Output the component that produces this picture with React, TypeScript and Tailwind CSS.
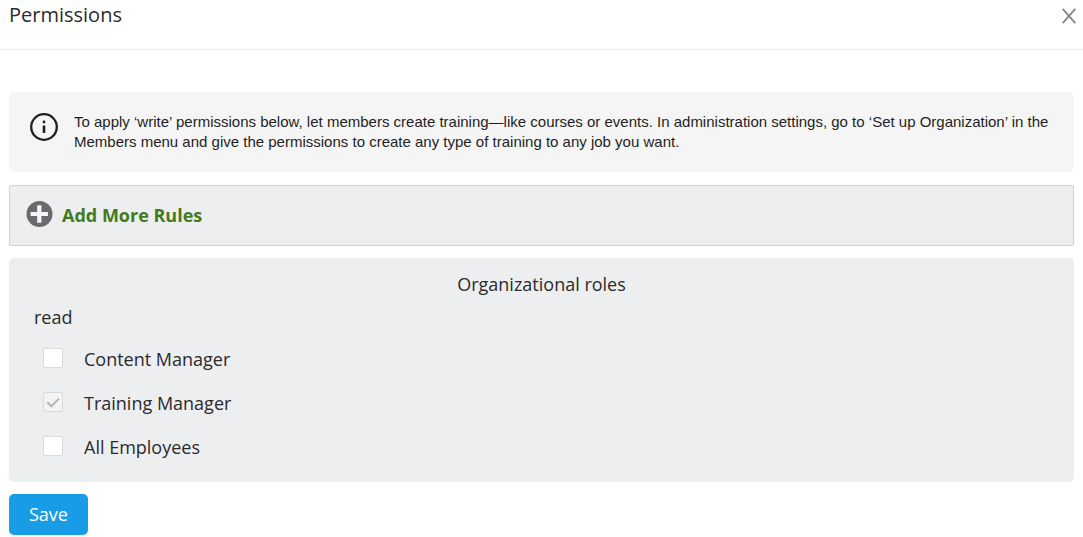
import { useState } from "react";

type Role = { id: string; name: string; checked: boolean; locked: boolean };

const initialRoles: Role[] = [
  { id: "content-manager", name: "Content Manager", checked: false, locked: false },
  { id: "training-manager", name: "Training Manager", checked: true, locked: true },
  { id: "all-employees", name: "All Employees", checked: false, locked: false },
];

function CloseIcon() {
  return (
    <svg width="14" height="16" viewBox="0 0 14 16" fill="none" stroke="#858585" strokeWidth="1.8" aria-hidden="true">
      <path d="M0.7 0.9 13.3 15.1M13.3 0.9 0.7 15.1" />
    </svg>
  );
}

function InfoIcon() {
  return (
    <svg className="shrink-0" width="28" height="30" viewBox="0 0 28 30" fill="none" aria-hidden="true">
      <circle cx="14" cy="15" r="12.8" stroke="#1f1f1f" strokeWidth="2.3" />
      <path d="M14 13.5v7.5" stroke="#1f1f1f" strokeWidth="2.6" />
      <circle cx="14" cy="10" r="1.4" fill="#1f1f1f" />
    </svg>
  );
}

function PlusIcon() {
  return (
    <svg className="shrink-0" width="27" height="28" viewBox="0 0 27 28" aria-hidden="true">
      <circle cx="13.5" cy="13" r="13" fill="#6b6b6b" />
      <path d="M13.3 4.3v17.4M4.6 13h17.4" stroke="#f4f5f6" strokeWidth="4.2" />
    </svg>
  );
}

function RoleRow({ role, onToggle }: { role: Role; onToggle: () => void }) {
  return (
    <li className="flex h-11 items-center">
      <span className="grid">
        <input
          id={role.id}
          type="checkbox"
          checked={role.checked}
          disabled={role.locked}
          onChange={onToggle}
          className="peer col-start-1 row-start-1 size-5 appearance-none rounded-xs border border-[#d9d9d9] bg-white disabled:bg-[#f3f3f3]"
        />
        <svg
          className="pointer-events-none invisible col-start-1 row-start-1 peer-checked:visible"
          width="20"
          height="20"
          viewBox="0 0 20 20"
          fill="none"
          stroke="#b5b5b5"
          strokeWidth="2"
          aria-hidden="true"
        >
          <path d="M4.3 10.2 8.3 14.3 16 6.6" />
        </svg>
      </span>
      <label htmlFor={role.id} className="pt-0.5 pl-[21px]">
        {role.name}
      </label>
    </li>
  );
}

export default function App() {
  const [roles, setRoles] = useState(initialRoles);
  const toggle = (id: string) =>
    setRoles((list) => list.map((r) => (r.id === id ? { ...r, checked: !r.checked } : r)));

  return (
    <div className="bg-white font-['Open_Sans',sans-serif] text-lg/6 text-[#2b2b2b]">
      <header className="flex h-[50px] items-start justify-between border-b border-[#e9e9e9] pr-[7px] pl-[9px]">
        <h1 className="pt-px text-xl/7">Permissions</h1>
        <button type="button" aria-label="Close" className="pt-2">
          <CloseIcon />
        </button>
      </header>

      <main className="flex flex-col items-stretch gap-3 px-[9px] pt-[42px]">
        <section className="mb-px flex items-start gap-4 rounded-[5px] bg-[#f5f5f5] px-[21px] py-5">
          <InfoIcon />
          <p className="font-['Liberation_Sans',Arial,sans-serif] text-[15px]/5 text-[#1f1f1f]">
            To apply ‘write’ permissions below, let members create training—like courses or events. In administration
            settings, go to ‘Set up Organization’ in the Members menu and give the permissions to create any type of
            training to any job you want.
          </p>
        </section>

        <button
          type="button"
          className="flex h-[61px] items-center gap-[9px] rounded-xs border border-[#d3d3d4] bg-[#edeef0] px-4 pb-0.5 font-bold text-[#447a1e]"
        >
          <PlusIcon />
          <span>Add More Rules</span>
        </button>

        <section className="rounded-[5px] bg-[#edeef0] px-[25px] pt-[14px] pb-[14px]">
          <h2 className="text-center">Organizational roles</h2>
          <h3 className="pt-[9px]">read</h3>
          <ul className="pt-[7px] pl-[9px]">
            {roles.map((role) => (
              <RoleRow key={role.id} role={role} onToggle={() => toggle(role.id)} />
            ))}
          </ul>
        </section>

        <button type="button" className="h-[41px] self-start rounded-[5px] bg-[#199ce6] px-5 pb-0.5 text-white">
          Save
        </button>
      </main>
    </div>
  );
}
